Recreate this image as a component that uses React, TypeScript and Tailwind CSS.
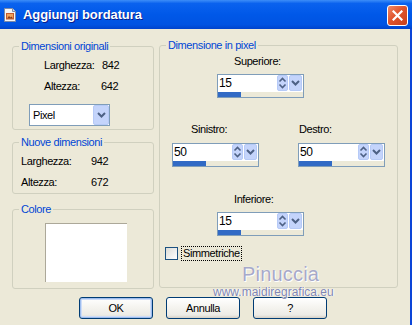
import React from 'react';

function UpDownButton() {
  return (
    <div className="w-[11px] h-[16px] rounded-[2px] bg-[#C4D4FB] border border-[#B6CAF7] flex items-center justify-center">
      <svg width="9" height="14" viewBox="0 0 9 14">
        <path d="M1.5 5.5L4.5 2.5L7.5 5.5" stroke="#4D6185" strokeWidth="1.6" fill="none" />
        <path d="M1.5 8.5L4.5 11.5L7.5 8.5" stroke="#4D6185" strokeWidth="1.6" fill="none" />
      </svg>
    </div>
  );
}

function DropButton({ className }: { className: string }) {
  return (
    <div className={`${className} rounded-[2px] bg-[#C4D4FB] border border-[#B6CAF7] flex items-center justify-center`}>
      <svg width="9" height="6" viewBox="0 0 9 6">
        <path d="M1 1L4.5 4.5L8 1" stroke="#4D6185" strokeWidth="2" fill="none" />
      </svg>
    </div>
  );
}

function Spin({ value, fill }: { value: string; fill: string }) {
  return (
    <div className="w-[87px] h-[24px] border border-[#7F9DB9] bg-white flex flex-col">
      <div className="h-[17px] flex items-start">
        <span className="flex-1 pl-[1px] pt-[1px] leading-[14px] text-[12px]">{value}</span>
        <UpDownButton />
        <DropButton className="ml-[1px] mr-[1px] w-[13px] h-[16px]" />
      </div>
      <div className="flex-1 bg-[#ECE9D8]">
        <div className={`${fill} h-full bg-[#316AC5]`} />
      </div>
    </div>
  );
}

function Group({ title, className, children }: { title: string; className: string; children?: React.ReactNode }) {
  return (
    <fieldset className={`${className} border border-[#D0D0BF] rounded-[3px]`}>
      <legend className="ml-[6px] px-[2px] leading-[13px] text-[#0046D5]">{title}</legend>
      {children}
    </fieldset>
  );
}

function XpButton({ label, primary }: { label: string; primary?: boolean }) {
  return (
    <button
      type="button"
      className={`w-[74px] h-[22px] rounded-[3px] border border-[#003C74] bg-[linear-gradient(to_bottom,#FFFFFF_0%,#F4F3EE_50%,#ECEBE6_85%,#D6D0C5_100%)] text-[11px] leading-none ${
        primary ? 'shadow-[inset_0_0_0_1px_#9EBDEE,inset_0_0_0_2px_#CEDDF8]' : ''
      }`}
    >
      {label}
    </button>
  );
}

export default function App() {
  return (
    <div className="w-[412px] h-[325px] overflow-hidden relative bg-[#ECE9D8] flex flex-col text-[11px] text-black tracking-[-0.4px] font-['Liberation_Sans',Arial,sans-serif]">
      {/* title bar */}
      <div className="h-[29px] shrink-0 flex items-center pl-[3px] pr-[4px] bg-[linear-gradient(to_bottom,#3D8EF8_0%,#0A62EE_12%,#0058E8_50%,#0053E2_85%,#0043CC_100%)]">
        <svg width="14" height="14" viewBox="0 0 14 14">
          <path d="M1.5 0.5h8l3 3v10h-11z" fill="#F6F6F6" stroke="#7E8AA6" />
          <path d="M9.5 0.5v3h3" fill="#D8DDE8" stroke="#7E8AA6" />
          <rect x="3" y="5" width="8" height="6.5" fill="#C75A2C" />
          <rect x="4" y="6" width="6" height="4.5" fill="#F0A35A" />
          <path d="M4 10.5l2-2.5 1.5 1.5 1-1 1.5 2z" fill="#8C3A1A" />
        </svg>
        <span className="ml-[6px] text-[13px] font-bold text-white tracking-[-0.1px] [text-shadow:1px_1px_#0A1E8C]">
          Aggiungi bordatura
        </span>
        <div className="ml-auto mt-[1px] w-[21px] h-[21px] rounded-[3px] border border-white bg-[linear-gradient(135deg,#EE8A6A_0%,#E0542C_45%,#C8401A_100%)] flex items-center justify-center">
          <svg width="11" height="11" viewBox="0 0 11 11">
            <path d="M1.5 1.5L9.5 9.5M9.5 1.5L1.5 9.5" stroke="#FFFFFF" strokeWidth="2.2" strokeLinecap="square" />
          </svg>
        </div>
      </div>

      {/* body */}
      <div className="flex-1 border-r-2 border-[#0C45D8] pl-[12px] pt-[10px] flex flex-col">
        <div className="flex items-start">
          {/* left column */}
          <div className="w-[142px] mt-[1px] flex flex-col">
            <Group title="Dimensioni originali" className="w-[142px] h-[90px]">
              <div className="pt-[2px] pl-[31px]">
                <div className="h-[21px] flex items-center">
                  <span className="w-[58px]">Larghezza:</span>
                  <span>842</span>
                </div>
                <div className="h-[21px] flex items-center">
                  <span className="w-[57px]">Altezza:</span>
                  <span>642</span>
                </div>
              </div>
              <div className="mt-[7px] ml-[16px] w-[81px] h-[22px] border border-[#7F9DB9] bg-white flex items-center">
                <span className="flex-1 pl-[3px]">Pixel</span>
                <DropButton className="w-[16px] h-[20px]" />
              </div>
            </Group>

            <Group title="Nuove dimensioni" className="mt-[6px] w-[142px] h-[58px]">
              <div className="pt-[2px] pl-[8px]">
                <div className="h-[21px] flex items-center">
                  <span className="w-[70px]">Larghezza:</span>
                  <span>942</span>
                </div>
                <div className="h-[21px] flex items-center">
                  <span className="w-[70px]">Altezza:</span>
                  <span>672</span>
                </div>
              </div>
            </Group>

            <Group title="Colore" className="mt-[9px] w-[142px] h-[86px]">
              <div className="pt-[7px] pl-[32px]">
                <div className="w-[82px] h-[59px] bg-white border-t border-l border-[#ACA899]" />
              </div>
            </Group>
          </div>

          {/* right column */}
          <Group title="Dimensione in pixel" className="ml-[5px] w-[239px] h-[249px]">
            <div className="flex flex-col items-start">
              <span className="mt-[3px] ml-[74px] h-[13px] leading-[13px]">Superiore:</span>
              <div className="mt-[6px] ml-[57px]">
                <Spin value="15" fill="w-[23px]" />
              </div>

              <div className="mt-[25px] ml-[12px] flex">
                <div className="flex flex-col items-start">
                  <span className="ml-[19px] h-[13px] leading-[13px]">Sinistro:</span>
                  <div className="mt-[7px]">
                    <Spin value="50" fill="w-[33px]" />
                  </div>
                </div>
                <div className="ml-[39px] flex flex-col items-start">
                  <span className="ml-[1px] h-[13px] leading-[13px]">Destro:</span>
                  <div className="mt-[7px]">
                    <Spin value="50" fill="w-[33px]" />
                  </div>
                </div>
              </div>

              <span className="mt-[26px] ml-[74px] h-[13px] leading-[13px]">Inferiore:</span>
              <div className="mt-[6px] ml-[57px]">
                <Spin value="15" fill="w-[23px]" />
              </div>

              <div className="mt-[11px] ml-[5px] h-[13px] flex items-center">
                <div className="w-[13px] h-[13px] border border-[#1C5180] bg-[linear-gradient(135deg,#DCDCD7_0%,#FFFFFF_100%)]" />
                <span className="ml-[3px] px-[1px] h-[15px] leading-[13px] border border-dotted border-black">Simmetriche</span>
              </div>
            </div>
          </Group>
        </div>

        {/* buttons */}
        <div className="mt-[8px] ml-[67px] flex gap-[13px]">
          <XpButton label="OK" primary />
          <XpButton label="Annulla" />
          <XpButton label="?" />
        </div>
      </div>

      {/* watermark */}
      <span className="absolute left-[242px] top-[264px] text-[20px] leading-none tracking-[0.2px] text-[#A7A9C9] [text-shadow:0_0_1px_#FFFFFF,1px_1px_0_#FFFFFF]">
        Pinuccia
      </span>
      <span className="absolute left-[213px] top-[286px] text-[12px] leading-none tracking-[0px] text-[#8086B2] [text-shadow:0_0_1px_#FFFFFF,1px_0_0_#FFFFFF]">
        www.maidiregrafica.eu
      </span>
    </div>
  );
}
